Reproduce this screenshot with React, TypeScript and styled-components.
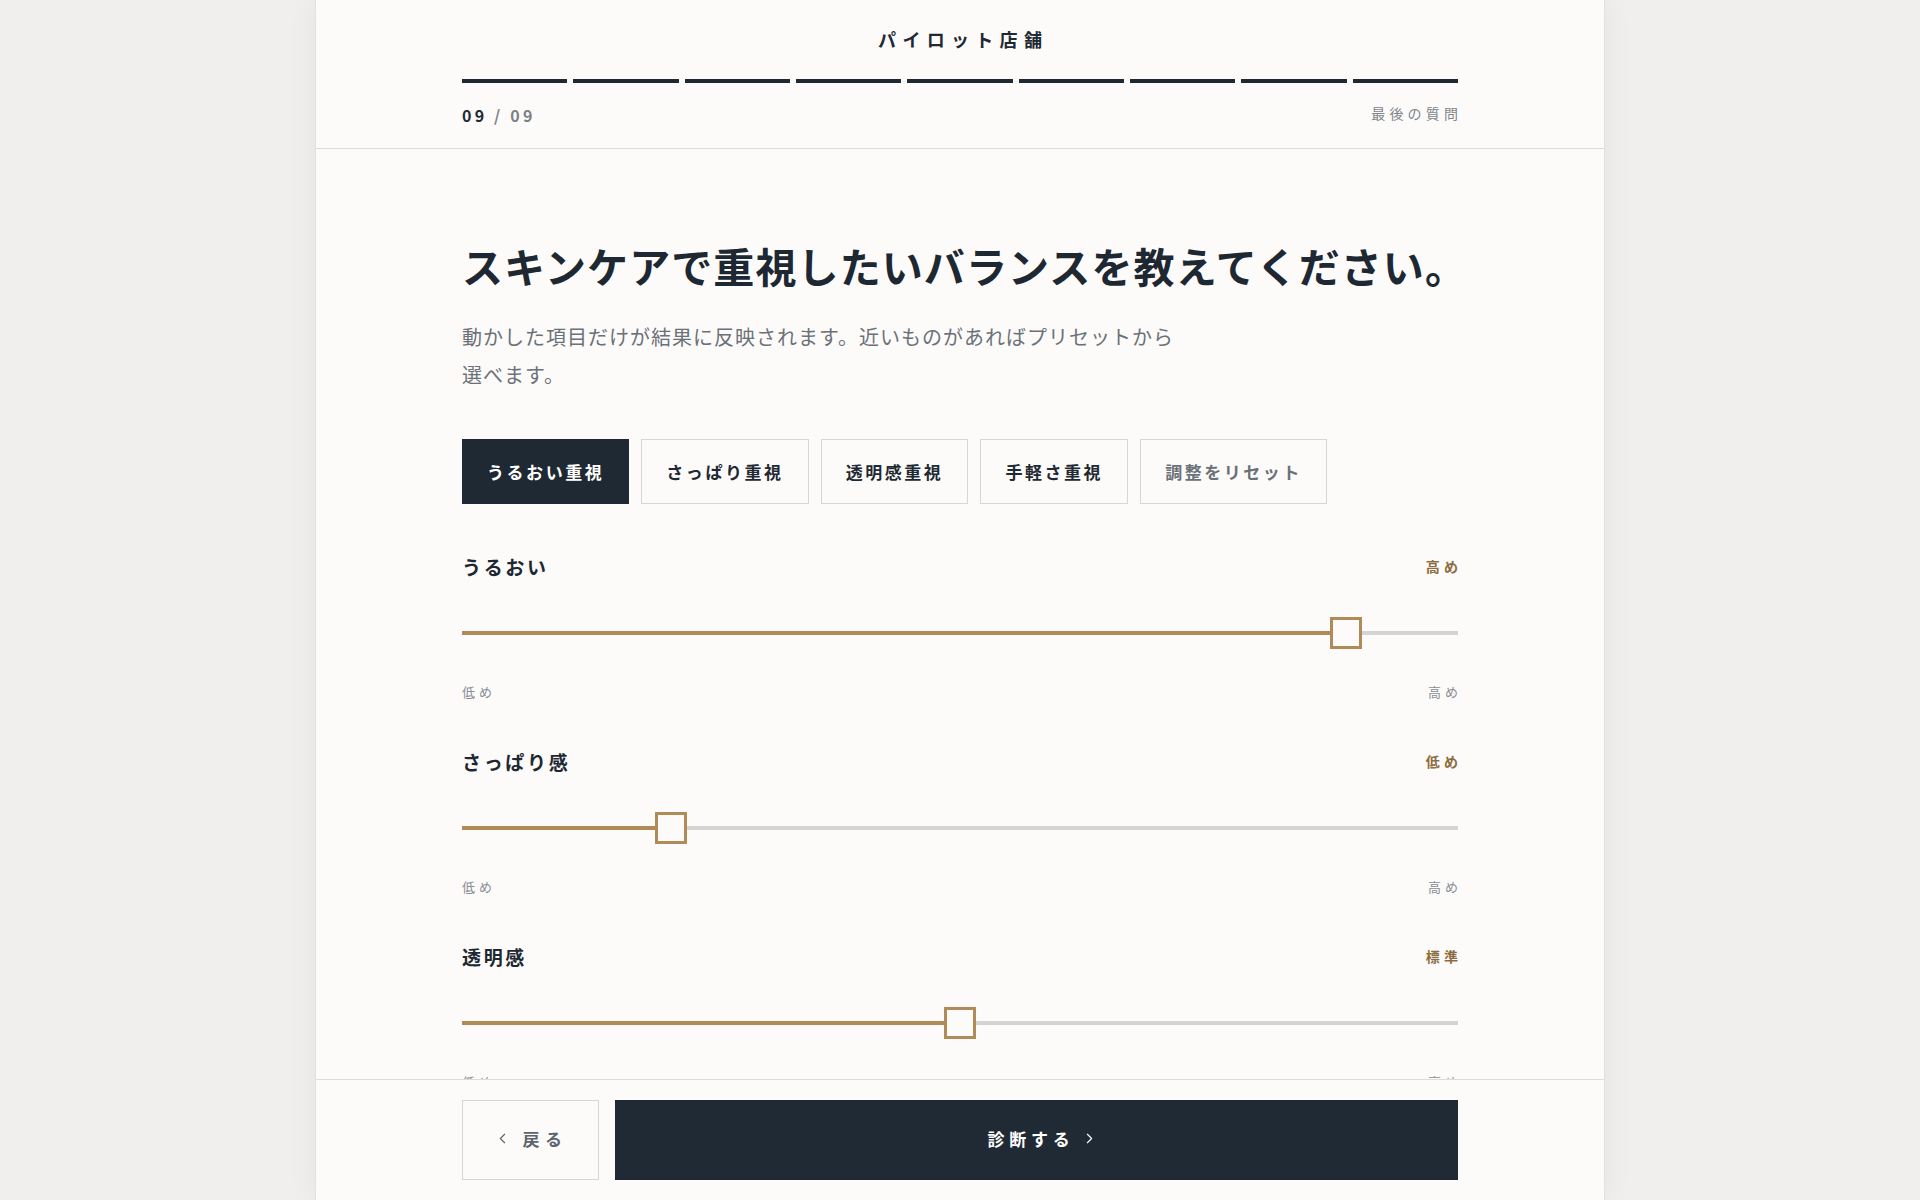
import React, { useState } from "react";
import styled, { createGlobalStyle } from "styled-components";
import { ChevronLeft, ChevronRight } from "lucide-react";

const GlobalStyle = createGlobalStyle`
  html, body {
    margin: 0;
    padding: 0;
    height: 100%;
    background: #f0efee;
    overflow: hidden;
  }
  * {
    box-sizing: border-box;
  }
  body {
    font-family: "Noto Sans CJK JP", "Noto Sans", sans-serif;
    color: #1f2933;
  }
`;

const Panel = styled.div`
  width: 1290px;
  height: 100vh;
  margin: 0 auto;
  display: flex;
  flex-direction: column;
  background: #fcfbf9;
  border-left: 1px solid #e2e1df;
  border-right: 1px solid #e2e1df;
  box-shadow: 0 0 28px rgba(0, 0, 0, 0.06);
`;

const Header = styled.header`
  flex: none;
  padding: 26px 0 22px;
  border-bottom: 1px solid #dcdcdc;
`;

const Inner = styled.div`
  width: 996px;
  margin: 0 auto;
`;

const StoreName = styled.div`
  text-align: center;
  font-size: 18px;
  line-height: 27px;
  font-weight: 700;
  letter-spacing: 0.35em;
  margin-right: -0.35em;
  color: #1f2933;
`;

const Progress = styled.div`
  margin-top: 26px;
  display: grid;
  grid-template-columns: repeat(9, 1fr);
  gap: 6px;
`;

const Segment = styled.div<{ $done: boolean }>`
  height: 4px;
  background: ${(p) => (p.$done ? "#1f2933" : "#dcdcdc")};
`;

const MetaRow = styled.div`
  margin-top: 21px;
  display: flex;
  justify-content: space-between;
  align-items: center;
  height: 22px;
`;

const Count = styled.div`
  font-size: 16px;
  font-weight: 700;
  letter-spacing: 0.2em;
  color: #7b8189;
`;

const Current = styled.span`
  color: #1f2933;
`;

const StepNote = styled.div`
  font-size: 14px;
  letter-spacing: 0.3em;
  margin-right: -0.3em;
  margin-bottom: 4px;
  color: #80858c;
`;

const Main = styled.main`
  flex: 1;
  overflow-y: auto;
  scrollbar-width: none;
  &::-webkit-scrollbar {
    display: none;
  }
`;

const Content = styled(Inner)`
  padding-top: 90px;
`;

const Heading = styled.h1`
  margin: 0;
  font-size: 41px;
  line-height: 53px;
  font-weight: 700;
  letter-spacing: 1.1px;
  color: #1e2833;
  white-space: nowrap;
`;

const Lead = styled.p`
  margin: 25.5px 0 0;
  max-width: 730px;
  font-size: 20px;
  line-height: 38px;
  letter-spacing: 0.05em;
  color: #6b7178;
`;

const Presets = styled.div`
  margin-top: 45px;
  display: flex;
  gap: 12px;
`;

const PresetButton = styled.button<{ $active?: boolean; $muted?: boolean }>`
  height: 65px;
  padding: 0 24px;
  font-family: inherit;
  font-size: 17px;
  font-weight: 700;
  letter-spacing: 0.15em;
  border: 1.5px solid ${(p) => (p.$active ? "#1f2933" : "#d6d6d6")};
  background: ${(p) => (p.$active ? "#1f2933" : "transparent")};
  color: ${(p) => (p.$active ? "#ffffff" : p.$muted ? "#6b7178" : "#1f2933")};
  cursor: pointer;
`;

const SliderBlock = styled.section`
  margin-top: 47.5px;
  & + & {
    margin-top: 45px;
  }
`;

const SliderHead = styled.div`
  display: flex;
  justify-content: space-between;
  align-items: center;
  height: 30px;
`;

const SliderLabel = styled.div`
  font-size: 19px;
  font-weight: 700;
  letter-spacing: 0.14em;
  color: #1e2833;
`;

const SliderValue = styled.div`
  font-size: 14px;
  font-weight: 700;
  letter-spacing: 0.3em;
  margin-right: -0.3em;
  color: #8c6c40;
`;

const Range = styled.input`
  display: block;
  width: 100%;
  height: 32px;
  margin: 36px 0 0;
  padding: 0;
  background: transparent;
  -webkit-appearance: none;
  appearance: none;
  cursor: pointer;

  &::-webkit-slider-runnable-track {
    height: 4px;
    background: linear-gradient(
      to right,
      #b08b57 var(--fill),
      #d4d4d4 var(--fill)
    );
  }
  &::-webkit-slider-thumb {
    -webkit-appearance: none;
    width: 32px;
    height: 32px;
    margin-top: -14px;
    box-sizing: border-box;
    border: 3px solid #b08b57;
    background: #fcfbf9;
  }
  &::-moz-range-track {
    height: 4px;
    background: #d4d4d4;
  }
  &::-moz-range-progress {
    height: 4px;
    background: #b08b57;
  }
  &::-moz-range-thumb {
    width: 32px;
    height: 32px;
    border: 3px solid #b08b57;
    border-radius: 0;
    background: #fcfbf9;
  }
`;

const Scale = styled.div`
  margin-top: 33px;
  display: flex;
  justify-content: space-between;
  font-size: 13px;
  line-height: 19px;
  letter-spacing: 0.3em;
  color: #8a8f96;

  span:last-child {
    margin-right: -0.3em;
  }
`;

const Footer = styled.footer`
  flex: none;
  padding: 20px 0;
  border-top: 1px solid #dcdcdc;
  background: #fcfbf9;
`;

const FooterRow = styled(Inner)`
  display: flex;
  gap: 16px;
`;

const NavButton = styled.button<{ $primary?: boolean }>`
  height: 80px;
  display: flex;
  align-items: center;
  justify-content: center;
  gap: ${(p) => (p.$primary ? "6px" : "12px")};
  padding: 0 0 3px ${(p) => (p.$primary ? "12px" : "0")};
  font-family: inherit;
  font-size: 17px;
  font-weight: 700;
  letter-spacing: ${(p) => (p.$primary ? "0.28em" : "0.32em")};
  cursor: pointer;
  ${(p) =>
    p.$primary
      ? `
    flex: 1;
    border: none;
    background: #202a35;
    color: #ffffff;
  `
      : `
    width: 137px;
    flex: none;
    border: 1.5px solid #d6d6d6;
    background: transparent;
    color: #5d646d;
  `}

  svg {
    flex: none;
  }
`;

type Key = "moist" | "fresh" | "clear";

const sliders: { key: Key; label: string }[] = [
  { key: "moist", label: "うるおい" },
  { key: "fresh", label: "さっぱり感" },
  { key: "clear", label: "透明感" },
];

const presets: { name: string; values: Record<Key, number> }[] = [
  { name: "うるおい重視", values: { moist: 90, fresh: 20, clear: 50 } },
  { name: "さっぱり重視", values: { moist: 30, fresh: 90, clear: 50 } },
  { name: "透明感重視", values: { moist: 50, fresh: 40, clear: 90 } },
  { name: "手軽さ重視", values: { moist: 50, fresh: 60, clear: 40 } },
];

const levelText = (v: number) => (v >= 67 ? "高め" : v <= 33 ? "低め" : "標準");

export default function App() {
  const [active, setActive] = useState(0);
  const [values, setValues] = useState<Record<Key, number>>(presets[0].values);

  const applyPreset = (i: number) => {
    setActive(i);
    setValues(presets[i].values);
  };

  const reset = () => {
    setActive(-1);
    setValues({ moist: 50, fresh: 50, clear: 50 });
  };

  return (
    <>
      <GlobalStyle />
      <Panel>
        <Header>
          <Inner>
            <StoreName>パイロット店舗</StoreName>
            <Progress>
              {Array.from({ length: 9 }).map((_, i) => (
                <Segment key={i} $done={i < 9} />
              ))}
            </Progress>
            <MetaRow>
              <Count>
                <Current>09</Current> / 09
              </Count>
              <StepNote>最後の質問</StepNote>
            </MetaRow>
          </Inner>
        </Header>

        <Main>
          <Content>
            <Heading>スキンケアで重視したいバランスを教えてください。</Heading>
            <Lead>
              動かした項目だけが結果に反映されます。近いものがあればプリセットから選べます。
            </Lead>

            <Presets>
              {presets.map((p, i) => (
                <PresetButton key={p.name} $active={active === i} onClick={() => applyPreset(i)}>
                  {p.name}
                </PresetButton>
              ))}
              <PresetButton $muted onClick={reset}>
                調整をリセット
              </PresetButton>
            </Presets>

            {sliders.map((s) => {
              const v = values[s.key];
              return (
                <SliderBlock key={s.key}>
                  <SliderHead>
                    <SliderLabel>{s.label}</SliderLabel>
                    <SliderValue>{levelText(v)}</SliderValue>
                  </SliderHead>
                  <Range
                    type="range"
                    min={0}
                    max={100}
                    value={v}
                    onChange={(e) => {
                      setActive(-1);
                      setValues({ ...values, [s.key]: Number(e.target.value) });
                    }}
                    style={
                      {
                        "--fill": `calc(16px + ${v / 100} * (100% - 32px))`,
                      } as React.CSSProperties
                    }
                  />
                  <Scale>
                    <span>低め</span>
                    <span>高め</span>
                  </Scale>
                </SliderBlock>
              );
            })}
          </Content>
        </Main>

        <Footer>
          <FooterRow>
            <NavButton>
              <ChevronLeft size={17} strokeWidth={1.6} />
              戻る
            </NavButton>
            <NavButton $primary>
              診断する
              <ChevronRight size={17} strokeWidth={1.6} />
            </NavButton>
          </FooterRow>
        </Footer>
      </Panel>
    </>
  );
}
